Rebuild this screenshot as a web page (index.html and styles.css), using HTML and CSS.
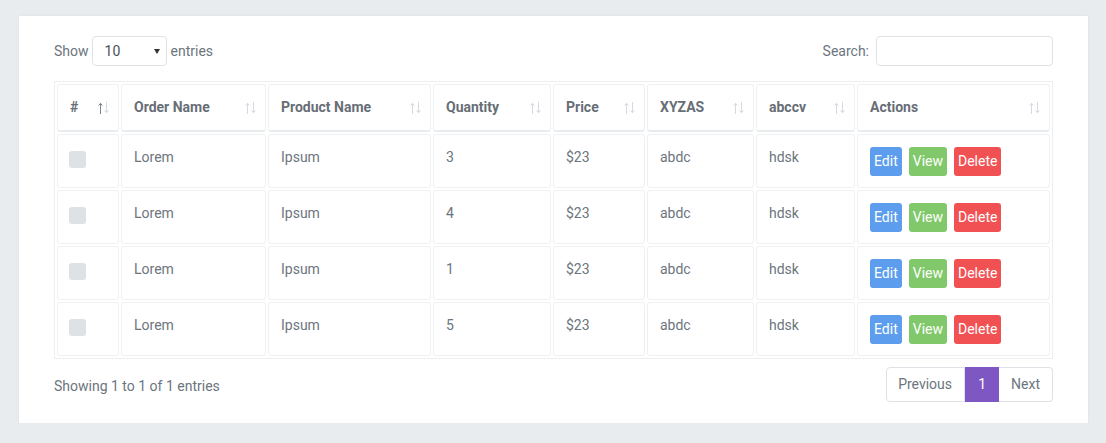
FILE: index.html
```html
<!DOCTYPE html>
<html lang="en">
<head>
<meta charset="utf-8">
<title>Orders</title>
<link rel="stylesheet" href="styles.css">
</head>
<body>
<div class="card">
  <div class="toolbar">
    <label class="length">Show
      <span class="select-wrap"><select class="select"><option>10</option><option>25</option><option>50</option></select></span>
      entries</label>
    <label class="search">Search: <input class="search-input" type="search"></label>
  </div>

  <table class="table">
    <colgroup>
      <col class="c1"><col class="c2"><col class="c3"><col class="c4"><col class="c5"><col class="c6"><col class="c7"><col class="c8">
    </colgroup>
    <thead>
      <tr>
        <th><div class="th-in"><span>#</span><svg class="sort asc" width="12" height="12" viewBox="0 0 12 12"><path class="up" d="M2.5 12V1.3M0.6 3.6L2.5 1.3L4.4 3.6"/><path class="down" d="M8.5 0V10.7M6.6 8.4L8.5 10.7L10.4 8.4"/></svg></div></th>
        <th><div class="th-in"><span>Order Name</span><svg class="sort" width="12" height="12" viewBox="0 0 12 12"><path class="up" d="M2.5 12V1.3M0.6 3.6L2.5 1.3L4.4 3.6"/><path class="down" d="M8.5 0V10.7M6.6 8.4L8.5 10.7L10.4 8.4"/></svg></div></th>
        <th><div class="th-in"><span>Product Name</span><svg class="sort" width="12" height="12" viewBox="0 0 12 12"><path class="up" d="M2.5 12V1.3M0.6 3.6L2.5 1.3L4.4 3.6"/><path class="down" d="M8.5 0V10.7M6.6 8.4L8.5 10.7L10.4 8.4"/></svg></div></th>
        <th><div class="th-in"><span>Quantity</span><svg class="sort" width="12" height="12" viewBox="0 0 12 12"><path class="up" d="M2.5 12V1.3M0.6 3.6L2.5 1.3L4.4 3.6"/><path class="down" d="M8.5 0V10.7M6.6 8.4L8.5 10.7L10.4 8.4"/></svg></div></th>
        <th><div class="th-in"><span>Price</span><svg class="sort" width="12" height="12" viewBox="0 0 12 12"><path class="up" d="M2.5 12V1.3M0.6 3.6L2.5 1.3L4.4 3.6"/><path class="down" d="M8.5 0V10.7M6.6 8.4L8.5 10.7L10.4 8.4"/></svg></div></th>
        <th><div class="th-in"><span>XYZAS</span><svg class="sort" width="12" height="12" viewBox="0 0 12 12"><path class="up" d="M2.5 12V1.3M0.6 3.6L2.5 1.3L4.4 3.6"/><path class="down" d="M8.5 0V10.7M6.6 8.4L8.5 10.7L10.4 8.4"/></svg></div></th>
        <th><div class="th-in"><span>abccv</span><svg class="sort" width="12" height="12" viewBox="0 0 12 12"><path class="up" d="M2.5 12V1.3M0.6 3.6L2.5 1.3L4.4 3.6"/><path class="down" d="M8.5 0V10.7M6.6 8.4L8.5 10.7L10.4 8.4"/></svg></div></th>
        <th><div class="th-in"><span>Actions</span><svg class="sort" width="12" height="12" viewBox="0 0 12 12"><path class="up" d="M2.5 12V1.3M0.6 3.6L2.5 1.3L4.4 3.6"/><path class="down" d="M8.5 0V10.7M6.6 8.4L8.5 10.7L10.4 8.4"/></svg></div></th>
      </tr>
    </thead>
    <tbody>
      <tr>
        <td><span class="check"></span></td><td>Lorem</td><td>Ipsum</td><td>3</td><td>$23</td><td>abdc</td><td>hdsk</td>
        <td><div class="actions"><button class="btn edit">Edit</button><button class="btn view">View</button><button class="btn del">Delete</button></div></td>
      </tr>
      <tr>
        <td><span class="check"></span></td><td>Lorem</td><td>Ipsum</td><td>4</td><td>$23</td><td>abdc</td><td>hdsk</td>
        <td><div class="actions"><button class="btn edit">Edit</button><button class="btn view">View</button><button class="btn del">Delete</button></div></td>
      </tr>
      <tr>
        <td><span class="check"></span></td><td>Lorem</td><td>Ipsum</td><td>1</td><td>$23</td><td>abdc</td><td>hdsk</td>
        <td><div class="actions"><button class="btn edit">Edit</button><button class="btn view">View</button><button class="btn del">Delete</button></div></td>
      </tr>
      <tr>
        <td><span class="check"></span></td><td>Lorem</td><td>Ipsum</td><td>5</td><td>$23</td><td>abdc</td><td>hdsk</td>
        <td><div class="actions"><button class="btn edit">Edit</button><button class="btn view">View</button><button class="btn del">Delete</button></div></td>
      </tr>
    </tbody>
  </table>

  <div class="footer">
    <div class="info">Showing 1 to 1 of 1 entries</div>
    <div class="pagination">
      <a class="page prev">Previous</a>
      <a class="page active">1</a>
      <a class="page next">Next</a>
    </div>
  </div>
</div>
</body>
</html>
```

FILE: styles.css
```css
* { box-sizing: border-box; }

html, body {
  margin: 0;
  background: #e9ecef;
}

body {
  padding: 16px 18px 0 19px;
  font-family: Roboto, "Liberation Sans", Arial, sans-serif;
  font-size: 14px;
  color: #6c757d;
}

.card {
  width: 1069px;
  height: 407px;
  background: #fff;
  padding: 20px 35px 0 35px;
  box-shadow: 0 0 3px rgba(0, 0, 0, 0.05);
}

.toolbar {
  display: flex;
  justify-content: space-between;
  align-items: center;
  height: 30px;
  margin-bottom: 15px;
}

.length, .search {
  display: flex;
  align-items: center;
  color: #6c757d;
}

.select-wrap {
  position: relative;
  margin: 0 4px 0 3px;
}

.select-wrap::after {
  content: "";
  position: absolute;
  right: 7px;
  top: 13px;
  border-left: 3px solid transparent;
  border-right: 3px solid transparent;
  border-top: 5px solid #333;
  pointer-events: none;
}

.select {
  appearance: none;
  -webkit-appearance: none;
  width: 75px;
  height: 30px;
  border: 1px solid #dfe2e6;
  border-radius: 4px;
  background: #fff;
  padding: 0 0 0 12px;
  font-family: inherit;
  font-size: 14px;
  color: #495057;
  outline: none;
}

.search-input {
  width: 177px;
  height: 30px;
  margin-left: 7px;
  border: 1px solid #dfe2e6;
  border-radius: 4px;
  background: #fff;
  outline: none;
}

.table {
  width: 999px;
  table-layout: fixed;
  border-collapse: separate;
  border-spacing: 2px;
  border: 1px solid #eceef1;
}

.c1 { width: 62px; }
.c2 { width: 145px; }
.c3 { width: 163px; }
.c4 { width: 118px; }
.c5 { width: 92px; }
.c6 { width: 107px; }
.c7 { width: 99px; }
.c8 { width: 193px; }

.table th, .table td {
  border: 1px solid #eff1f3;
  border-radius: 3px;
  text-align: left;
}

.table th {
  height: 48px;
  padding: 12px 8px 13px 12px;
  line-height: 20px;
  border-bottom: 2px solid #e9ecef;
  font-weight: 700;
  color: #676e76;
}

.th-in {
  display: flex;
  justify-content: space-between;
  align-items: center;
}

.sort {
  display: block;
  margin-top: 2px;
  fill: none;
  stroke-width: 1;
}

.sort .up, .sort .down {
  stroke: #d6d9dd;
}

.sort.asc .up {
  stroke: #7c848c;
}

.table td {
  height: 54px;
  padding: 12px 12px 11px 12px;
  line-height: 20px;
  vertical-align: top;
  color: #6c757d;
}

.check {
  display: block;
  width: 17px;
  height: 17px;
  margin: 4px 0 0 -1px;
  background: #dee2e6;
  border-radius: 3px;
}

.actions {
  display: flex;
  gap: 7px;
}

.btn {
  height: 29px;
  padding: 0 4px;
  border: none;
  border-radius: 3px;
  font-family: inherit;
  font-size: 14px;
  line-height: 29px;
  color: #fff;
  cursor: pointer;
}

.btn.edit { background: #5c9ded; }
.btn.view { background: #80c86a; }
.btn.del { background: #f15153; }

.footer {
  display: flex;
  justify-content: space-between;
  align-items: center;
  margin-top: 8px;
}

.info {
  padding-top: 3px;
  color: #6c757d;
}

.pagination {
  display: flex;
}

.page {
  display: block;
  height: 35px;
  line-height: 33px;
  padding: 0 12px;
  border: 1px solid #dee2e6;
  color: #6c757d;
  background: #fff;
  cursor: pointer;
}

.page.prev {
  border-radius: 4px 0 0 4px;
  padding: 0 12px 0 11px;
}

.page.active {
  background: #7e57c2;
  border-color: #7e57c2;
  color: #fff;
  width: 34px;
  padding: 0;
  text-align: center;
}

.page.next {
  border-left: none;
  border-radius: 0 4px 4px 0;
}
```
